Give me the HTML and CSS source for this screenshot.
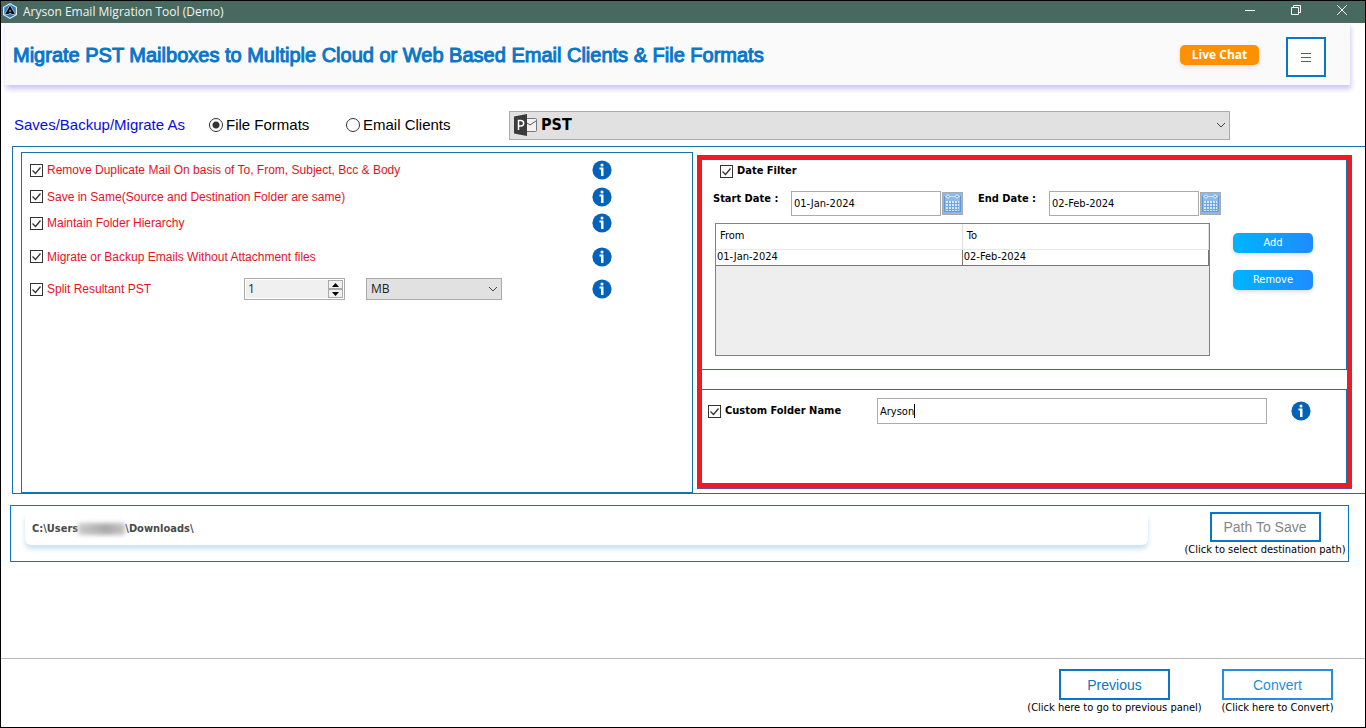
FILE: index.html
```html
<!DOCTYPE html>
<html lang="en">
<head>
<meta charset="utf-8">
<title>Aryson Email Migration Tool (Demo)</title>
<link rel="stylesheet" href="styles.css">
</head>
<body>
<svg class="defs" width="0" height="0" aria-hidden="true">
  <symbol id="info" viewBox="0 0 20 20">
    <circle cx="10" cy="10" r="9.6" fill="#0463b8"/>
    <circle cx="10" cy="5" r="1.500" fill="#fff"/>
    <path d="M7.500 7.500h4v8.500H9V9.500H7.500z" fill="#fff"/>
  </symbol>
  <symbol id="calendar" viewBox="0 0 21 23">
    <rect x=".5" y=".5" width="20" height="22" fill="#8bb9ec" stroke="#a5abb3"/>
    <path d="M2 4.5h17M2.5 4.5v15h16v-15" fill="none" stroke="#5f98d8"/>
    <path d="M3 4.500h15" stroke="#cfe4fb"/>
    <circle cx="6" cy="4.500" r="1.500" fill="#6ea6e2" stroke="#e4f1ff"/>
    <circle cx="15" cy="4.500" r="1.500" fill="#6ea6e2" stroke="#e4f1ff"/>
    <rect x="4" y="9" width="13" height="10" fill="#d9eafc"/>
    <path d="M4 11.500h13M4 14.500h13M4 17.500h13M6.500 9v10M9.500 9v10M12.500 9v10M15.500 9v10" stroke="#6fa5e0"/>
  </symbol>
</svg>
<div class="window">
  <header class="titlebar">
    <svg class="app-icon" width="16" height="16" viewBox="0 0 16 16" aria-hidden="true">
      <path d="M8 0l7 4v8l-7 4-7-4V4z" fill="#dcebf8"/>
      <path d="M8 1.300l5.800 3.300v6.800L8 14.700l-5.800-3.300V4.600z" fill="#2f7cc0"/>
      <path d="M8 2l5.500 9.500h-3.500L8 10l-2 1.500H2.500z" fill="#05080d" stroke="#eef6ff" stroke-width=".6"/>
      <path d="M7 8.500L8 6.500l1 2z" fill="#dcebf8"/>
    </svg>
    <span class="app-name">Aryson Email Migration Tool (Demo)</span>
    <div class="window-buttons">
      <button type="button" aria-label="Minimize"><svg width="12" height="12" viewBox="0 0 12 12"><path d="M1 6.500h10"/></svg></button>
      <button type="button" aria-label="Restore"><svg width="12" height="12" viewBox="0 0 12 12"><path d="M1.500 3.500h7v7h-7zM3.500 3.500v-2h7v7h-2"/></svg></button>
      <button type="button" aria-label="Close"><svg width="12" height="12" viewBox="0 0 12 12"><path d="M1 1l10 10M11 1L1 11"/></svg></button>
    </div>
  </header>

  <div class="banner">
    <h1>Migrate PST Mailboxes to Multiple Cloud or Web Based Email Clients &amp; File Formats</h1>
    <button type="button" class="chat">Live Chat</button>
    <button type="button" class="menu" aria-label="Menu"><svg width="12" height="12" viewBox="0 0 12 12"><path d="M1 2.500h10M1 6.500h10M1 10.500h10" stroke="#0a76c8" fill="none"/></svg></button>
  </div>

  <main>
    <div class="format-row">
      <span class="save-as">Saves/Backup/Migrate As</span>
      <label class="choice choice-file"><input type="radio" name="kind" checked>File Formats</label>
      <label class="choice choice-email"><input type="radio" name="kind">Email Clients</label>
      <div class="format-select">
        <svg class="format-icon" width="24" height="22" viewBox="0 0 24 22" aria-hidden="true">
          <path d="M12 4.500h10.500a1 1 0 0 1 1 1v11a1 1 0 0 1-1 1H12z" fill="#f2f2f2" stroke="#777"/>
          <path d="M14 9l3 2 6-4" fill="none" stroke="#555"/>
          <path d="M1 2.500L14 0v22L1 19.500z" fill="#3b3b3b"/>
          <path d="M5.500 16V6.500h2.400a2.600 2.600 0 0 1 0 5.500H5.500" fill="none" stroke="#fff" stroke-width="1.500"/>
        </svg>
        <select aria-label="File format"><option>PST</option></select>
      </div>
    </div>

    <div class="settings">
      <section class="options">
        <label class="option"><input type="checkbox" checked>Remove Duplicate Mail On basis of To, From, Subject, Bcc &amp; Body</label>
        <svg class="info"><use href="#info"/></svg>
        <label class="option"><input type="checkbox" checked>Save in Same(Source and Destination Folder are same)</label>
        <svg class="info"><use href="#info"/></svg>
        <label class="option"><input type="checkbox" checked>Maintain Folder Hierarchy</label>
        <svg class="info"><use href="#info"/></svg>
        <label class="option"><input type="checkbox" checked>Migrate or Backup Emails Without Attachment files</label>
        <svg class="info"><use href="#info"/></svg>
        <div class="split">
          <label class="option"><input type="checkbox" checked>Split Resultant PST</label>
          <div class="spinner">
            <input type="number" value="1" aria-label="Split size">
            <div class="steps">
              <button type="button" aria-label="Increase"><svg width="7" height="4" viewBox="0 0 7 4"><path d="M0 4l3.500-4L7 4z"/></svg></button>
              <button type="button" aria-label="Decrease"><svg width="7" height="4" viewBox="0 0 7 4"><path d="M0 0l3.500 4L7 0z"/></svg></button>
            </div>
          </div>
          <select class="unit" aria-label="Size unit"><option>MB</option></select>
        </div>
        <svg class="info"><use href="#info"/></svg>
      </section>

      <div class="filters">
        <section class="dates">
          <label class="check-label"><input type="checkbox" checked>Date Filter</label>
          <div class="date-row">
            <label for="start">Start Date :</label>
            <input id="start" type="text" value="01-Jan-2024">
            <button type="button" class="calendar" aria-label="Choose start date"><svg width="21" height="23"><use href="#calendar"/></svg></button>
            <label for="end" class="end-label">End Date :</label>
            <input id="end" type="text" value="02-Feb-2024">
            <button type="button" class="calendar" aria-label="Choose end date"><svg width="21" height="23"><use href="#calendar"/></svg></button>
          </div>
          <div class="range-row">
            <div class="ranges">
              <table>
                <thead><tr><th>From</th><th>To</th></tr></thead>
                <tbody><tr><td>01-Jan-2024</td><td>02-Feb-2024</td></tr></tbody>
              </table>
            </div>
            <div class="range-actions">
              <button type="button">Add</button>
              <button type="button">Remove</button>
            </div>
          </div>
        </section>
        <section class="custom">
          <label class="check-label" for="custom-on"><input type="checkbox" id="custom-on" checked>Custom Folder Name</label>
          <div class="folder-field">
            <input type="text" value="Aryson" aria-label="Custom folder name">
            <span class="caret"></span>
          </div>
          <svg class="info"><use href="#info"/></svg>
        </section>
      </div>
    </div>

    <section class="path">
      <div class="path-value"><span>C:\Users</span><span class="redacted"></span><span>\Downloads\</span></div>
      <div class="action save">
        <button type="button">Path To Save</button>
        <span>(Click to select destination path)</span>
      </div>
    </section>
  </main>

  <footer>
    <div class="action">
      <button type="button">Previous</button>
      <span>(Click here to go to previous panel)</span>
    </div>
    <div class="action convert">
      <button type="button">Convert</button>
      <span>(Click here to Convert)</span>
    </div>
  </footer>
</div>
</body>
</html>
```

FILE: styles.css
```css
* { box-sizing: border-box; }

:root {
  --ui: "DejaVu Sans Condensed", "DejaVu Sans", sans-serif;
  --arial: "Liberation Sans", Arial, sans-serif;
  --humanist: "Open Sans", "Noto Sans", sans-serif;
  --blue: #0a76c8;
  --line: #1673a8;
}

body { margin: 0; background: #fff; color: #000; font: 11px/16px var(--ui); }
button, input, select { font: inherit; color: inherit; margin: 0; padding: 0; border-radius: 0; }
h1 { margin: 0; }
.defs { position: absolute; }

.window { display: flex; flex-direction: column; min-height: 100vh; border: 1px solid #000; overflow: hidden; }

.titlebar { display: flex; height: 22px; background: #48695f; color: #f1f4f3; font: 12px/22px var(--humanist); }
.app-icon { margin: 2px 5px 0 1px; }
.window-buttons { display: flex; margin-left: auto; }
.window-buttons button { width: 46px; height: 18px; border: 0; background: none; }
.window-buttons svg { display: block; margin: auto; fill: none; stroke: #fff; }

.banner { display: flex; align-items: flex-start; height: 62px; margin: 0 15px 0 4px; padding: 14px 24px 0 8px; background: #fafafb; box-shadow: 1px 4px 5px #cfc6fa; }
h1 { flex: 1; color: var(--blue); font: 20px/36px var(--arial); -webkit-text-stroke: 1px var(--blue); white-space: nowrap; }
.chat { width: 79px; height: 20px; margin: 8px 27px 0 0; border: 0; border-radius: 5px; background: #ff9000; color: #fff; font: bold 12px/20px var(--humanist); box-shadow: 0 2px 4px #ddd; }
.menu { width: 40px; height: 40px; border: 2px solid var(--blue); background: #fff; }
.menu svg { display: block; margin: auto; }

main { padding-left: 9px; }
.format-row { display: flex; align-items: center; height: 61px; padding: 19px 0 0 4px; font: 15px/20px var(--arial); }
.save-as { width: 195px; color: #0a0ae0; }
.choice { display: flex; align-items: center; gap: 3px; white-space: nowrap; }
.choice-file { width: 137px; }
.choice-email { width: 163px; }
.choice input { appearance: none; width: 14px; height: 14px; border: 1px solid #333; border-radius: 50%; background: #fff; }
.choice input:checked { background: radial-gradient(circle, #333 0 3px, #fff 4px); }
.format-select { position: relative; flex: 1; margin-right: 135px; }
.format-icon { position: absolute; left: 4px; top: 3px; }
select { appearance: none; border: 1px solid #a8acac; background: #e1e1e1 url("data:image/svg+xml,%3Csvg xmlns='http://www.w3.org/2000/svg' width='10' height='6'%3E%3Cpath d='M1 1l4 4 4-4' fill='none' stroke='%23444'/%3E%3C/svg%3E") no-repeat right 3px center; }
.format-select select { display: block; width: 100%; height: 29px; padding-left: 31px; font: bold 16px/24px var(--ui); }

.settings { display: grid; grid-template-columns: 672fr 655fr; column-gap: 4px; margin-left: 2px; padding: 5px 13px 0 8px; border: 1px solid var(--line); border-right: 0; }

.options { display: grid; grid-template-columns: 1fr 20px; grid-template-rows: 26px 27px 26px 41px 24px; align-items: center; align-content: start; padding: 4px 80px 0 8px; border: 1px solid var(--line); color: #e4121f; font: 12px/16px var(--arial); }
.option { display: flex; align-items: center; gap: 4px; white-space: nowrap; }
input[type="checkbox"] { appearance: none; flex: none; width: 13px; height: 13px; border: 1px solid #333; background: #fff url("data:image/svg+xml,%3Csvg xmlns='http://www.w3.org/2000/svg' width='11' height='11'%3E%3Cpath d='M1.500 5.500l3 3 5-6' fill='none' stroke='%23333' stroke-width='1.300'/%3E%3C/svg%3E") no-repeat center; }
.info { display: block; width: 20px; height: 20px; }
.split { display: flex; align-items: center; }
.split .option { width: 214px; }
.spinner { display: flex; width: 101px; height: 22px; margin-right: 21px; padding: 1px; border: 1px solid #a8acac; background: #fff; }
.spinner input { flex: 1; min-width: 0; padding-left: 2px; border: 0; background: #f0f0f0; color: #222; font: 12px/16px var(--humanist); appearance: textfield; }
.spinner input::-webkit-inner-spin-button { appearance: none; }
.steps { display: flex; flex-direction: column; width: 15px; }
.steps button { display: flex; flex: 1; align-items: center; justify-content: center; border: 1px solid #aaa; background: #f0f0f0; }
.unit { width: 136px; height: 22px; padding-left: 4px; color: #222; font: 12px/16px var(--humanist); }

.filters { display: flex; flex-direction: column; gap: 19px; height: 333px; margin: 3px 0 5px; border: 5px solid #ed1c24; box-shadow: 0 1px #70508c; }
.dates { padding: 3px 0 13px 11px; border: solid var(--line); border-width: 0 1px 1px 0; }
.check-label { display: flex; align-items: center; gap: 4px; font-weight: bold; white-space: nowrap; }
.dates .check-label { margin-left: 7px; }
.date-row { display: flex; align-items: center; margin: 12px 0 7px; }
.date-row label { align-self: flex-start; width: 78px; font-weight: bold; white-space: nowrap; }
.date-row .end-label { width: 71px; margin-left: 15px; }
input[type="text"] { border: 1px solid #ababab; background: #fff; padding-left: 2px; }
.date-row input { width: 150px; height: 25px; }
.calendar { width: 21px; height: 23px; margin-left: 1px; border: 0; background: none; }
.calendar svg { display: block; }
.range-row { display: flex; margin-left: 2px; }
.ranges { flex: 1; height: 133px; border: 1px solid #828282; background: #eee; }
table { width: 100%; table-layout: fixed; border-collapse: collapse; background: #fff; }
th { height: 25px; padding: 0 4px; border-right: 1px solid #e0e0e0; border-bottom: 1px solid #e8e8e8; font-weight: normal; text-align: left; }
td { height: 16px; padding: 0 1px; border-right: 1px solid #777; border-bottom: 1px solid #777; line-height: 14px; }
.range-actions { display: flex; flex-direction: column; gap: 17px; margin: 10px 33px 0 23px; }
.range-actions button { width: 80px; height: 20px; border: 0; border-radius: 5px; background: linear-gradient(90deg, #00b4ff, #1e8cff); color: #fff; box-shadow: 0 2px 4px #ddd; }

.custom { flex: 1; display: flex; align-items: flex-start; padding: 8px 35px 0 6px; border: solid var(--line); border-width: 1px 1px 0 0; }
.custom .check-label { width: 169px; height: 26px; }
.folder-field { position: relative; flex: 1; margin-right: 24px; }
.folder-field input { display: block; width: 100%; height: 26px; }
.caret { position: absolute; left: 37px; top: 6px; width: 1px; height: 14px; background: #000; }
.custom .info { margin-top: 3px; }

.path { display: flex; align-items: flex-start; height: 57px; margin: 11px 16px 0 0; padding: 6px 6px 0 14px; border: 1px solid var(--blue); }
.path-value { display: flex; align-items: center; flex: 1; height: 33px; margin-right: 40px; padding-left: 7px; border-radius: 6px; background: #fff; box-shadow: 0 4px 5px #c9e2f5; color: #4a4a4a; font-weight: bold; }
.redacted { width: 47px; height: 12px; background: linear-gradient(90deg, #ccc, #aaa 60%, #c4c4c4); filter: blur(2px); }
.action { display: flex; flex-direction: column; align-items: center; width: 111px; white-space: nowrap; }
.action button { width: 111px; height: 31px; border: 2px solid var(--blue); background: #fff; color: var(--blue); font: 14px/20px var(--arial); }
.save { width: 154px; }
.save button { height: 30px; color: #858585; }

footer { display: flex; align-items: flex-start; justify-content: flex-end; gap: 52px; height: 69px; margin-top: auto; padding: 10px 32px 0 0; border-top: 1px solid #b8b8b8; }
.convert button { border-color: #2a8be0; color: #2a8be0; }
```
